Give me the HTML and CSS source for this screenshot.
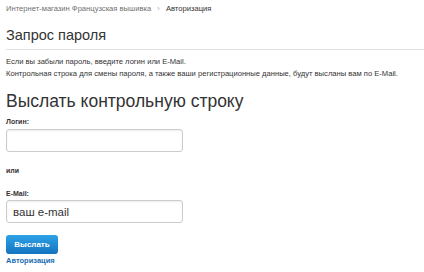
FILE: index.html
```html
<!DOCTYPE html>
<html lang="ru">

<head>
    <meta charset="UTF-8">
    <title>Запрос пароля</title>
    <link rel="stylesheet" href="styles.css">
</head>

<body>
    <div class="page">
        <div class="breadcrumbs">
            <a href="#">Интернет-магазин Французская вышивка</a>
            <span class="sep">&rsaquo;</span>
            <span class="current">Авторизация</span>
        </div>

        <h1>Запрос пароля</h1>

        <div class="note">
            <p>Если вы забыли пароль, введите логин или E-Mail.</p>
            <p>Контрольная строка для смены пароля, а также ваши регистрационные данные, будут высланы вам по E-Mail.</p>
        </div>

        <form class="forgot-form">
            <h2>Выслать контрольную строку</h2>
            <label for="login" class="label-login">Логин:</label>
            <input type="text" id="login">
            <div class="or">или</div>
            <label for="email" class="label-email">E-Mail:</label>
            <input type="text" id="email" value="ваш e-mail">
            <button type="button" class="btn">Выслать</button>
            <a href="#" class="auth-link">Авторизация</a>
        </form>
    </div>
</body>

</html>
```

FILE: styles.css
```css
/* Reset */
* {
    margin: 0;
    padding: 0;
    box-sizing: border-box;
}

body {
    font-family: "Liberation Sans", Arial, sans-serif;
    color: #333;
    background: #fff;
}

.page {
    padding: 4px 0 0 6px;
}

/* Breadcrumbs */
.breadcrumbs {
    font-size: 7.6px;
    line-height: 10px;
    color: #6f6f6f;
}

.breadcrumbs a {
    color: #6f6f6f;
    text-decoration: none;
}

.breadcrumbs .sep {
    color: #aaa;
    margin: 0 4px;
}

.breadcrumbs .current {
    color: #333;
}

/* Title */
h1 {
    font-size: 14.5px;
    font-weight: normal;
    line-height: 18px;
    margin-top: 12px;
    padding-bottom: 5px;
    border-bottom: 1px solid #e3e3e3;
}

.note {
    margin-top: 6px;
    font-size: 7.6px;
    line-height: 11.5px;
    color: #333;
}

/* Form */
.forgot-form {
    display: flex;
    flex-direction: column;
    align-items: flex-start;
}

.forgot-form h2 {
    font-size: 17.5px;
    font-weight: normal;
    line-height: 22px;
    margin-top: 11px;
}

.forgot-form label,
.or {
    font-size: 7px;
    font-weight: bold;
    line-height: 9px;
    color: #333;
}

.label-login {
    margin-top: 5px;
}

.label-email {
    margin-top: 14px;
}

.forgot-form input {
    width: 177px;
    height: 23px;
    padding: 0 6px;
    border: 1px solid #ccc;
    border-radius: 3px;
    font-family: inherit;
    font-size: 11.5px;
    color: #333;
    box-shadow: inset 0 1px 2px rgba(0, 0, 0, 0.08);
}

#login {
    margin-top: 3px;
}

#email {
    margin-top: 2.5px;
}

.or {
    margin-top: 13.5px;
}

.btn {
    margin-top: 12px;
    width: 52px;
    height: 19px;
    border: 0;
    border-radius: 3px;
    background: linear-gradient(#2ea2e6, #1474c0);
    color: #fff;
    font-family: inherit;
    font-size: 8px;
    font-weight: bold;
}

.auth-link {
    font-size: 7.5px;
    font-weight: bold;
    line-height: 10px;
    color: #1b6db3;
    text-decoration: none;
    margin-top: 2px;
}
```
